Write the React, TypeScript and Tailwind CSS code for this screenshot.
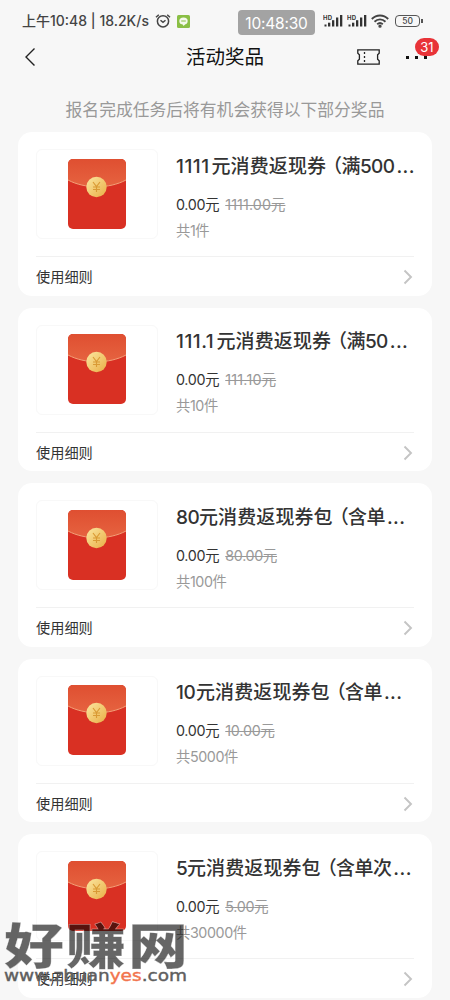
import React from "react";
import clsx from "clsx";

type Prize = {
  id: number;
  amount: string;
  amountClass: string;
  name: string;
  condition: string;
  oldPrice: string;
  oldPriceClass: string;
  count: string;
};

const prizes: Prize[] = [
  {
    id: 1,
    amount: "1111",
    amountClass: "w-[35.5px] tracking-[0.5px]",
    name: "元消费返现券",
    condition: "（满500",
    oldPrice: "1111.00",
    oldPriceClass: "tracking-[0.1px]",
    count: "1",
  },
  {
    id: 2,
    amount: "111.1",
    amountClass: "w-[40.5px] tracking-[0.5px]",
    name: "元消费返现券",
    condition: "（满50",
    oldPrice: "111.10",
    oldPriceClass: "tracking-[0.2px]",
    count: "10",
  },
  {
    id: 3,
    amount: "80",
    amountClass: "w-[23px] tracking-[-0.5px]",
    name: "元消费返现券包",
    condition: "（含单",
    oldPrice: "80.00",
    oldPriceClass: "tracking-[-0.3px]",
    count: "100",
  },
  {
    id: 4,
    amount: "10",
    amountClass: "w-[20px] tracking-[-0.3px]",
    name: "元消费返现券包",
    condition: "（含单",
    oldPrice: "10.00",
    oldPriceClass: "tracking-[-0.2px]",
    count: "5000",
  },
  {
    id: 5,
    amount: "5",
    amountClass: "w-[11px]",
    name: "元消费返现券包",
    condition: "（含单次",
    oldPrice: "5.00",
    oldPriceClass: "tracking-[-0.3px]",
    count: "30000",
  },
];

const Signal = () => (
  <svg width="21" height="15" viewBox="0 0 21 15" fill="#333">
    <text x="0" y="5.5" fontSize="6" fontWeight="700" textLength="9">
      HD
    </text>
    <rect x="1.5" y="10.5" width="2" height="2" />
    <rect x="5" y="8.7" width="2.3" height="3.8" />
    <rect x="9" y="6.2" width="2.3" height="6.3" />
    <rect x="13" y="3.5" width="2.3" height="9" />
    <rect x="17" y="1" width="2.3" height="11.5" />
  </svg>
);

const StatusBar = () => (
  <div className="flex h-[40px] items-center pl-[22px] pt-[2px] text-[#444]">
    <span className="w-[132px] whitespace-nowrap text-[14px] font-medium">
      上午10:48 | 18.2K/s
    </span>
    <svg width="17" height="16" viewBox="0 0 17 16" fill="none" stroke="#444" strokeWidth="1.5">
      <circle cx="9" cy="8.3" r="5.6" />
      <path d="M6.5 7.2 9 9.3l2.5-2.1M2 4.2 4.8 1.7M16 4.2l-2.8-2.5" />
    </svg>
    <svg className="ml-[6px]" width="13" height="13" viewBox="0 0 13 13">
      <rect width="13" height="13" rx="1.5" fill="#8abf45" />
      <ellipse cx="6.5" cy="6" rx="4.2" ry="3.5" fill="#f4f9ec" />
      <path d="M5.5 9h3l-2 2Z" fill="#f4f9ec" />
      <path d="M4.2 6h4.6" stroke="#8abf45" strokeWidth="1" />
    </svg>
    <div className="ml-[48px] mt-[3px] flex h-[25px] w-[77px] items-center justify-center rounded-[4px] bg-[#a3a3a3] pt-[2px] text-[15.5px] tracking-[-0.2px] text-white">
      10:48:30
    </div>
    <div className="ml-[8px] flex items-center">
      <Signal />
      <span className="w-[3px]" />
      <Signal />
    </div>
    <svg className="ml-[3px]" width="18" height="14" viewBox="0 0 18 14" fill="none" stroke="#444" strokeWidth="1.9">
      <path d="M.8 5C5.5.3 12.5.3 17.2 5M3.5 7.7c3.2-3.1 7.8-3.1 11 0M6.2 10.3c1.7-1.5 3.9-1.5 5.6 0" />
      <circle cx="9" cy="12.2" r=".7" fill="#444" />
    </svg>
    <div className="ml-[6px] flex h-[12px] w-[25px] items-center justify-center rounded-[4px] border border-[#555] text-[8.5px] font-medium">
      50
    </div>
    <span className="ml-[1px] h-[4px] w-[2px] bg-[#555]" />
  </div>
);

const Header = () => (
  <header className="flex h-[34px] items-center">
    <svg className="ml-[24px]" width="12" height="20" viewBox="0 0 12 20" fill="none" stroke="#222" strokeWidth="1.4">
      <path d="M10.5 1.5 2 10l8.5 8.5" />
    </svg>
    <h1 className="ml-[150px] w-[171px] whitespace-nowrap pt-[2px] text-[19.5px] font-normal text-[#111]">
      活动奖品
    </h1>
    <svg width="23" height="16" viewBox="0 0 23 16" fill="none" stroke="#222" strokeWidth="1.3">
      <path d="M.8.8h21.4v3.4l-1.6 1.6v4.4l1.6 1.6v3.4H.8v-3.4l1.6-1.6V5.8L.8 4.2Z" />
      <path d="M7.5 3v10" strokeDasharray="2 2" />
    </svg>
    <div className="relative ml-[26px] flex gap-[6px]">
      <span className="size-[3px] bg-[#111]" />
      <span className="size-[3px] bg-[#111]" />
      <span className="size-[3px] bg-[#111]" />
      <span className="absolute -top-[18px] left-[9px] flex h-[18px] w-[24px] items-center justify-center rounded-full bg-[#e83338] pt-px text-[13px] text-white">
        31
      </span>
    </div>
  </header>
);

const RedPacket = ({ id }: { id: number }) => (
  <svg width="60" height="72" viewBox="0 0 60 72">
    <defs>
      <linearGradient id={`flap-${id}`} x1="0" y1="0" x2="0" y2="1">
        <stop offset="0" stopColor="#df4f31" />
        <stop offset="1" stopColor="#e66340" />
      </linearGradient>
      <linearGradient id={`coin-${id}`} x1="0" y1="0" x2="1" y2="1">
        <stop offset="0" stopColor="#fbe7a0" />
        <stop offset="1" stopColor="#e9ae45" />
      </linearGradient>
    </defs>
    <rect x="1" y="1" width="58" height="70" rx="5" fill="#d93023" />
    <path
      d="M1 22V6a5 5 0 0 1 5-5h48a5 5 0 0 1 5 5v16C42 31 18 31 1 22Z"
      fill={`url(#flap-${id})`}
    />
    <path d="M1 22c17 9 41 9 58 0" fill="none" stroke="#f3a078" strokeWidth="1" />
    <circle cx="29.5" cy="29" r="10.2" fill={`url(#coin-${id})`} />
    <path
      d="m26 24 3.5 4.5L33 24m-3.5 4.5V34M26 29h7m-7 2.5h7"
      fill="none"
      stroke="#d99a35"
      strokeWidth="1.1"
    />
  </svg>
);

const PrizeCard = ({ prize }: { prize: Prize }) => (
  <article className="h-[163.5px] shrink-0 rounded-[14px] bg-white px-[18px] pt-[17px]">
    <div className="flex h-[108px] border-b border-[#f1f1f1]">
      <div className="flex h-[90px] w-[122px] shrink-0 items-center justify-center rounded-[6px] border border-[#f8f8f8] pb-px">
        <RedPacket id={prize.id} />
      </div>
      <div className="ml-[18px] text-[14.3px]">
        <h2 className="mt-[3px] flex h-[28px] items-center whitespace-nowrap text-[19px] font-medium text-[#333]">
          <span className={clsx("shrink-0", prize.amountClass)}>{prize.amount}</span>
          <span className="tracking-[0.1px]">{prize.name}</span>
          <span className="-ml-[3px] tracking-[-0.6px]">{prize.condition}</span>
          <span className="ml-[2px] tracking-[0.4px]">...</span>
        </h2>
        <p className="mt-[14px] flex h-[22px] items-center gap-[6px] whitespace-nowrap">
          <span className="tracking-[-0.3px] text-[#333]">0.00元</span>
          <span className={clsx("text-[#999] line-through", prize.oldPriceClass)}>
            {prize.oldPrice}元
          </span>
        </p>
        <p className="mt-[4px] flex h-[22px] items-center tracking-[-0.4px] text-[#999]">
          共{prize.count}件
        </p>
      </div>
    </div>
    <div className="flex h-[38px] items-center justify-between pt-[2px] text-[14.2px] text-[#333]">
      <span className="pt-px">使用细则</span>
      <svg className="mr-[1px]" width="10" height="16" viewBox="0 0 10 16" fill="none" stroke="#c4c4c4" strokeWidth="1.9">
        <path d="m1.5 1.5 6.5 6.5-6.5 6.5" />
      </svg>
    </div>
  </article>
);

const Watermark = () => (
  <div className="absolute left-[4px] top-[918px] h-[70px] w-[190px]">
    <svg width="190" height="70" viewBox="0 0 190 70">
      <text
        transform="translate(0 46) scale(1 .82)"
        fontSize="60"
        fontWeight="900"
        textLength="184"
        fill="#000"
        fillOpacity=".6"
        stroke="#fff"
        strokeOpacity=".5"
        strokeWidth=".6"
      >
        好赚网
      </text>
      <text
        x="0"
        y="63"
        fontSize="16"
        textLength="183"
        lengthAdjust="spacingAndGlyphs"
        fill="#5e5e5e"
        stroke="#5e5e5e"
        strokeWidth=".4"
        className="font-['DejaVu_Sans']"
      >
        www.zhuan
        <tspan fill="#f2744d" stroke="#f2744d">yes</tspan>.com
      </text>
    </svg>
  </div>
);

const App = () => {
  return (
    <main className="relative flex h-[1000px] w-[450px] flex-col overflow-hidden bg-[#f7f7f7] font-['Inter','Noto_Sans_CJK_SC',sans-serif] leading-none">
      <StatusBar />
      <Header />
      <p className="flex h-[58px] items-center justify-center pt-[14px] text-[16.8px] text-[#999]">
        报名完成任务后将有机会获得以下部分奖品
      </p>
      <section className="flex flex-col gap-[12px] px-[18px]">
        {prizes.map((prize) => (
          <PrizeCard key={prize.id} prize={prize} />
        ))}
      </section>
      <Watermark />
    </main>
  );
};

export default App;
